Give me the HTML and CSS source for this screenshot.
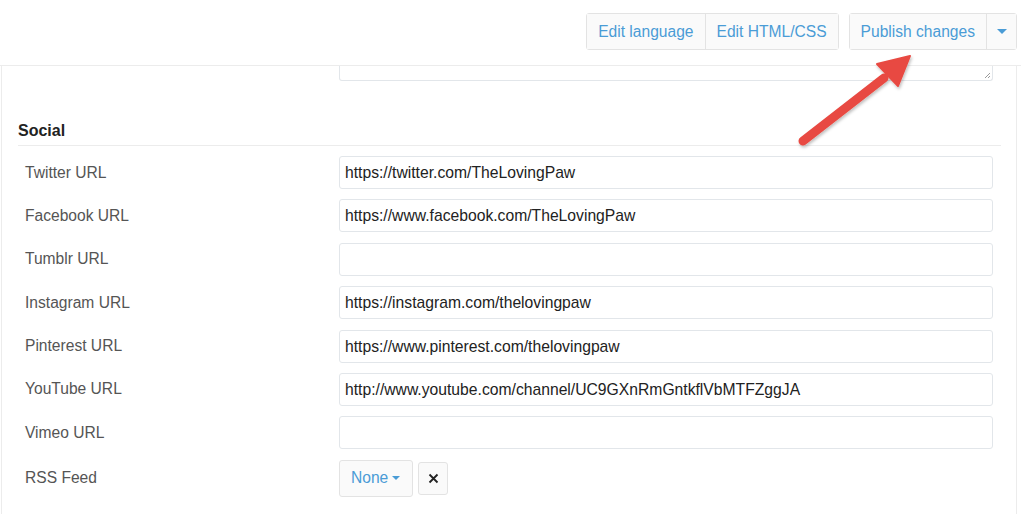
FILE: index.html
```html
<!DOCTYPE html>
<html>
<head>
<meta charset="utf-8">
<link rel="stylesheet" href="styles.css">
</head>
<body>
<header class="topbar">
  <div class="btn-group">
    <button class="btn">Edit language</button>
    <button class="btn">Edit HTML/CSS</button>
  </div>
  <div class="btn-group">
    <button class="btn">Publish changes</button>
    <button class="btn caret-btn"><span class="caret"></span></button>
  </div>
</header>
<main class="panel">
  <div class="textarea-row">
    <div class="textarea-tail">
      <svg class="grip" width="7" height="7" viewBox="0 0 7 7"><path d="M6 1L1 6M6 4L4 6" stroke="#9a9a9a" stroke-width="1"/></svg>
    </div>
  </div>
  <h3 class="section-title">Social</h3>
  <div class="form">
    <div class="row"><label>Twitter URL</label><div class="input">https://twitter.com/TheLovingPaw</div></div>
    <div class="row"><label>Facebook URL</label><div class="input">https://www.facebook.com/TheLovingPaw</div></div>
    <div class="row"><label>Tumblr URL</label><div class="input"></div></div>
    <div class="row"><label>Instagram URL</label><div class="input">https://instagram.com/thelovingpaw</div></div>
    <div class="row"><label>Pinterest URL</label><div class="input">https://www.pinterest.com/thelovingpaw</div></div>
    <div class="row"><label>YouTube URL</label><div class="input">http://www.youtube.com/channel/UC9GXnRmGntkflVbMTFZggJA</div></div>
    <div class="row"><label>Vimeo URL</label><div class="input"></div></div>
    <div class="row rss"><label>RSS Feed</label>
      <div class="rss-ctrls">
        <button class="btn none-btn">None <span class="caret small"></span></button>
        <button class="btn x-btn"><svg width="11" height="11" viewBox="0 0 11 11"><path d="M1.5 1.5L9.5 9.5M9.5 1.5L1.5 9.5" stroke="#222" stroke-width="1.8"/></svg></button>
      </div>
    </div>
  </div>
</main>
<svg class="arrow" width="1021" height="514" viewBox="0 0 1021 514">
  <defs>
    <filter id="sh" x="-20%" y="-20%" width="140%" height="140%">
      <feDropShadow dx="1" dy="2" stdDeviation="1.5" flood-color="#000" flood-opacity="0.25"/>
    </filter>
  </defs>
  <g filter="url(#sh)" fill="#e84a42" stroke="#e84a42">
    <line x1="803" y1="141" x2="884" y2="78" stroke-width="9" stroke-linecap="round"/>
    <polygon points="910,56 877,64 898,86" stroke-width="2" stroke-linejoin="round"/>
  </g>
</svg>
</body>
</html>
```
FILE: styles.css
```css
* { box-sizing: border-box; }
html, body { margin: 0; padding: 0; }
body {
  width: 1021px;
  height: 514px;
  overflow: hidden;
  background: #fff;
  font-family: "Liberation Sans", Arial, sans-serif;
  position: relative;
}
.topbar {
  height: 66px;
  border-bottom: 1px solid #ececec;
  display: flex;
  justify-content: flex-end;
  align-items: flex-start;
  padding: 13px 4px 0 0;
  gap: 10px;
}
.btn-group {
  display: flex;
  border: 1px solid #e3e3e3;
  border-radius: 3px;
  background: #fafafa;
  height: 37px;
}
.btn {
  font-family: "Liberation Sans", Arial, sans-serif;
  font-size: 15.6px;
  color: #4a9cd6;
  background: #fafafa;
  border: none;
  padding: 0 11px 0 11px;
  margin: 0;
  cursor: pointer;
  display: flex;
  align-items: center;
}
.btn-group .btn + .btn { border-left: 1px solid #e3e3e3; }
.caret-btn { width: 30px; justify-content: center; padding: 0; }
.caret {
  width: 0; height: 0;
  border-left: 5px solid transparent;
  border-right: 5px solid transparent;
  border-top: 5px solid #4a9cd6;
}
.caret.small { border-left-width: 4.5px; border-right-width: 4.5px; border-top-width: 4.5px; margin-left: 4px; }
.panel {
  border-left: 1px solid #ececec;
  border-right: 1px solid #ececec;
  margin: 0 4px 0 1px;
  height: 448px;
  padding: 0 15px 0 16px;
}
.textarea-row { padding-left: 321px; padding-right: 8px; }
.textarea-tail {
  height: 15px;
  border: 1px solid #e2e6ea;
  border-top: none;
  border-radius: 0 0 3px 3px;
  position: relative;
}
.grip { position: absolute; right: 1px; bottom: 1px; }
.section-title {
  margin: 40px 0 0 0;
  font-size: 16px;
  line-height: 20px;
  font-weight: bold;
  color: #222;
  padding-bottom: 4px;
  border-bottom: 1px solid #ececec;
}
.form { padding-top: 10px; display: flex; flex-direction: column; gap: 10.4px; }
.row {
  display: grid;
  grid-template-columns: 321px 654px;
  align-items: center;
}
.row label {
  font-size: 15.6px;
  color: #555;
  padding-left: 7px;
}
.input {
  height: 33px;
  border: 1px solid #e2e6ea;
  border-radius: 3px;
  font-size: 15.7px;
  color: #222;
  padding: 0 5px;
  line-height: 31px;
  white-space: nowrap;
}
.rss-ctrls { display: flex; align-items: center; gap: 5px; }
.none-btn {
  height: 37px;
  width: 74px;
  border: 1px solid #e3e3e3;
  border-radius: 3px;
  padding: 0 0 0 11px;
}
.x-btn {
  height: 33px;
  width: 30px;
  border: 1px solid #e3e3e3;
  border-radius: 3px;
  padding: 0;
  justify-content: center;
}
.arrow { position: absolute; left: 0; top: 0; pointer-events: none; }
```
